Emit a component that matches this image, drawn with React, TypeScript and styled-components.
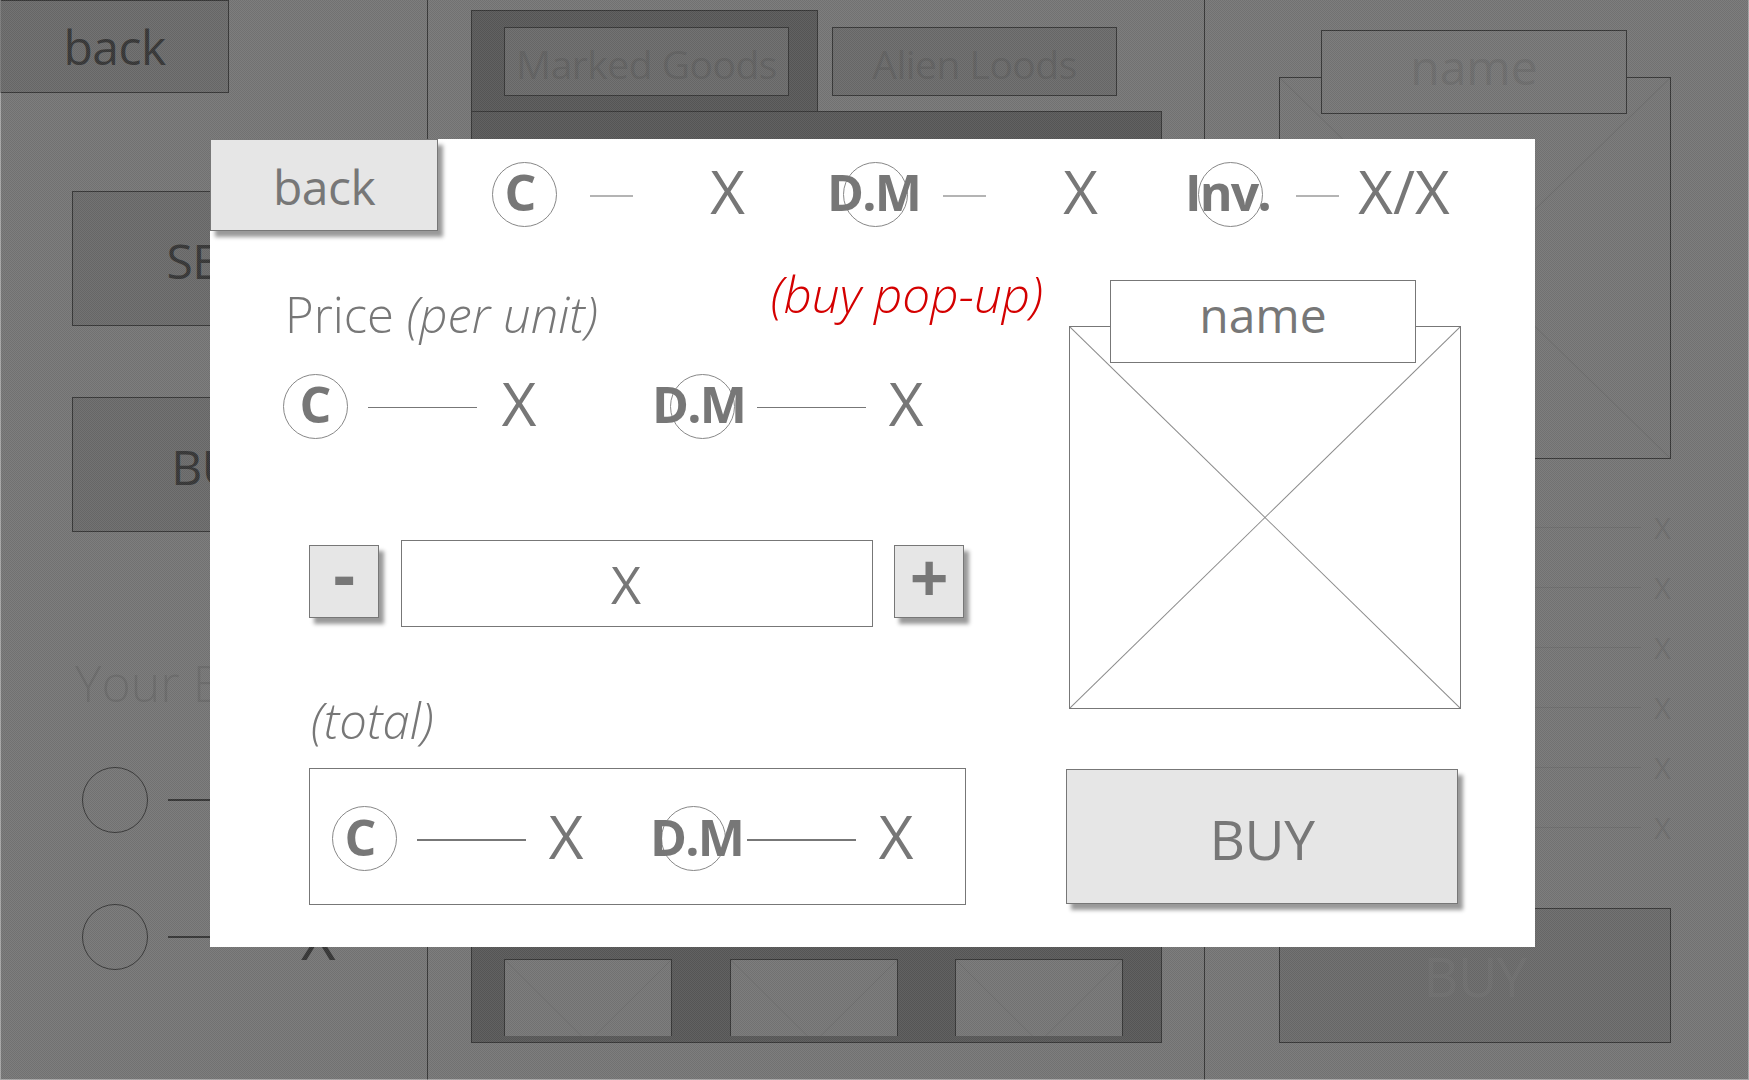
import styled, { createGlobalStyle } from 'styled-components';

const GlobalStyle = createGlobalStyle`
  html, body {
    margin: 0;
    padding: 0;
    background: #fff;
  }
  * {
    box-sizing: border-box;
  }
`;

const FONT = `'Open Sans', 'Liberation Sans', sans-serif`;
const GREY = '#777';

// #region page behind the scrim
const Page = styled.div`
  position: relative;
  display: grid;
  grid-template-columns: 427px 777px 545px;
  width: 1749px;
  height: 1080px;
  overflow: hidden;
  background: #fff;
  color: ${GREY};
  font-family: ${FONT};
  font-weight: 400;
`;

const Column = styled.section`
  display: flex;
  flex-direction: column;
  align-items: flex-start;
  height: 1080px;
  & + & {
    border-left: 1px solid ${GREY};
  }
`;

const Button = styled.div<{ $w: number; $h: number; $ink?: string }>`
  display: grid;
  place-items: center;
  flex: none;
  width: ${p => p.$w}px;
  height: ${p => p.$h}px;
  border: 1.5px solid ${GREY};
  background: #e6e6e6;
  font-size: 48px;
  letter-spacing: -0.5px;
  color: ${p => p.$ink ?? GREY};
`;

const SideAction = styled(Button)`
  margin: 98px 0 -27px 72px;
  padding-top: 4px;
`;

const BagTitle = styled.h2`
  margin: 148px 0 54px 75px;
  font-size: 50px;
  font-weight: 300;
  line-height: 60px;
  color: #e8e8e8;
`;

const BagRow = styled.div`
  display: flex;
  align-items: center;
  margin: 0 0 71px 82px;
`;

const BagCircle = styled.span`
  flex: none;
  width: 66px;
  height: 66px;
  border: 1.5px solid ${GREY};
  border-radius: 50%;
`;

const BagDash = styled.span`
  width: 110px;
  height: 2px;
  margin: 0 23px 0 20px;
  background: ${GREY};
`;

const BagValue = styled.span`
  font-size: 60px;
  line-height: 66px;
`;

const Tabs = styled.div`
  display: flex;
  margin-left: 43px;
  height: 111px;
  flex: none;
`;

const Tab = styled.div<{ $active?: boolean }>`
  display: flex;
  align-items: flex-start;
  padding: ${p => (p.$active ? '16px 28px 0 32px' : '27px 0 0')};
  margin-top: ${p => (p.$active ? '10px' : '0')};
  margin-right: 14px;
  border: ${p => (p.$active ? `1.5px solid ${GREY}` : 'none')};
  border-bottom: none;
  background: ${p => (p.$active ? '#c1c1c1' : 'transparent')};
`;

const TabLabel = styled(Button)`
  padding-top: 4px;
  font-size: 39px;
  white-space: nowrap;
`;

const GoodsPanel = styled.div`
  display: flex;
  align-items: flex-end;
  gap: 57.5px;
  width: 691px;
  height: 932px;
  margin-left: 43px;
  padding: 0 0 6px 32px;
  border: 1.5px solid ${GREY};
  background: #c1c1c1;
`;

const Placeholder = styled.div`
  position: relative;
  background: #fff;
  border: 1.5px solid ${GREY};
`;

const Thumb = styled(Placeholder)`
  width: 168px;
  height: 77px;
  border-bottom: none;
  overflow: hidden;
`;

const Cross = styled.svg<{ $h?: number }>`
  position: absolute;
  inset: 0;
  width: 100%;
  height: ${p => (p.$h ? `${p.$h}px` : '100%')};
`;

const Crossed = ({ faint, clip }: { faint?: boolean; clip?: number }) => (
  <Cross viewBox="0 0 100 100" preserveAspectRatio="none" $h={clip}>
    <line x1="0" y1="0" x2="100" y2="100" stroke={faint ? '#ececec' : '#8a8a8a'} strokeWidth="1" vectorEffect="non-scaling-stroke" />
    <line x1="100" y1="0" x2="0" y2="100" stroke={faint ? '#ececec' : '#8a8a8a'} strokeWidth="1" vectorEffect="non-scaling-stroke" />
  </Cross>
);

const ItemImage = styled(Placeholder)`
  width: 392px;
  height: 382px;
  margin: 77px 0 0 74px;
  flex: none;
`;

const NameTag = styled.div`
  position: absolute;
  display: grid;
  place-items: center;
  padding-bottom: 12px;
  background: #fff;
  border: 1.5px solid ${GREY};
`;

const BackName = styled(NameTag)`
  top: -48px;
  left: 41px;
  width: 306px;
  height: 84px;
  font-size: 48px;
  color: #ececec;
`;

const StatRows = styled.div`
  display: flex;
  flex-direction: column;
  align-items: flex-end;
  width: 466px;
  margin-top: 51px;
  gap: 26px;
`;

const StatRow = styled.div`
  display: flex;
  align-items: center;
  height: 34px;
  color: #ececec;
  font-size: 29px;
`;

const StatDash = styled.span`
  width: 300px;
  height: 1px;
  margin-right: 13px;
  background: #ececec;
`;

const BackBuy = styled(Button)`
  margin: 64px 0 0 74px;
  font-size: 54px;
`;

// the dim layer is a fine dither in the source, with a lighter hairline at the edges
const Scrim = styled.div`
  position: absolute;
  inset: 0;
  border: solid rgba(255, 255, 255, 0.35);
  border-width: 0 1px 1px 1px;
  background-color: rgba(0, 0, 0, 0.533);
  background-image: repeating-conic-gradient(rgba(0, 0, 0, 0.05) 0 25%, rgba(255, 255, 255, 0.05) 0 50%);
  background-size: 2px 2px;
`;
// #endregion

// #region pop-up
const Modal = styled.div`
  position: absolute;
  top: 139px;
  left: 210px;
  display: flex;
  flex-direction: column;
  width: 1325px;
  height: 808px;
  background: #fff;
  color: ${GREY};
`;

const RaisedButton = styled(Button)`
  box-shadow: 5px 6px 4px rgba(0, 0, 0, 0.4);
`;

const BackButton = styled(RaisedButton)`
  padding-top: 3px;
`;

const TopBar = styled.div`
  display: flex;
  align-items: center;
  height: 92px;
  flex: none;
`;

const TopStats = styled.div`
  display: flex;
  align-items: center;
  gap: 21px;
  margin: 18px 0 0 54px;
`;

const Stat = styled.div`
  display: flex;
  align-items: center;
`;

const Coin = styled.div<{ $shift?: number; $gapLeft?: number }>`
  display: flex;
  align-items: center;
  justify-content: center;
  flex: none;
  width: 65px;
  height: 65px;
  margin-left: ${p => p.$gapLeft ?? 0}px;
  border: 1px solid #888;
  border-radius: 50%;

  span {
    flex: none;
    font-size: 50px;
    font-weight: 700;
    letter-spacing: -1.8px;
    white-space: nowrap;
    transform: translate(${p => p.$shift ?? 0}px, -2px);
  }
`;

const Dash = styled.span<{ $w: number; $soft?: boolean; $gap?: number }>`
  flex: none;
  width: ${p => p.$w}px;
  height: ${p => (p.$soft ? 2 : 1.5)}px;
  margin-top: 3px;
  margin-left: ${p => p.$gap ?? 20}px;
  background: ${p => (p.$soft ? '#b4b4b4' : GREY)};
`;

const Amount = styled.span<{ $w: number }>`
  flex: none;
  width: ${p => p.$w}px;
  margin-bottom: 6px;
  font-size: 60px;
  line-height: 66px;
  text-align: center;
`;

const Body = styled.div`
  display: grid;
  grid-template-columns: 856px 1fr;
`;

const Main = styled.div`
  display: flex;
  flex-direction: column;
  align-items: flex-start;
  padding-left: 73px;
`;

const Side = styled.div`
  display: flex;
  flex-direction: column;
  align-items: flex-start;
`;

const TitleRow = styled.div`
  display: flex;
  align-items: flex-start;
  margin-top: 33px;
  padding-left: 2px;
`;

const PriceTitle = styled.h3`
  margin: 20px 0 0;
  font-size: 49px;
  font-weight: 350;
  line-height: 60px;

  em {
    font-size: 49px;
  }
`;

const Note = styled.em`
  margin-left: 173px;
  font-size: 49.5px;
  font-weight: 350;
  line-height: 60px;
  color: #d40000;
`;

const PriceRow = styled.div`
  display: flex;
  align-items: center;
  margin-top: 26px;
`;

const Stepper = styled.div`
  display: flex;
  align-items: center;
  margin: 94px 0 0 26px;
`;

const StepButton = styled(RaisedButton)<{ $lift: number }>`
  padding-bottom: ${p => p.$lift}px;
  font-size: 68px;
  font-weight: 700;
  line-height: 20px;
`;

const QuantityBox = styled.div`
  display: grid;
  place-items: center;
  width: 472px;
  height: 87px;
  margin: 4px 21px 0 22px;
  padding-right: 22px;
  border: 1.5px solid ${GREY};
  font-size: 52px;
`;

const TotalLabel = styled.em`
  margin: 63px 0 18px 28px;
  font-size: 49px;
  font-weight: 350;
  line-height: 60px;
`;

const TotalBox = styled.div`
  display: flex;
  align-items: center;
  width: 657px;
  height: 137px;
  margin-left: 26px;
  padding: 4px 0 0 22px;
  border: 1.5px solid ${GREY};
`;

const PopupImage = styled(Placeholder)`
  width: 392px;
  height: 383px;
  margin: 95px 0 0 3px;
`;

const PopupName = styled(NameTag)`
  top: -47px;
  left: 40px;
  width: 306px;
  height: 83px;
  padding-bottom: 14px;
  font-size: 48px;
`;

const BuyButton = styled(RaisedButton)`
  margin-top: 60px;
  padding-top: 4px;
  font-size: 55px;
`;
// #endregion

const App = () => (
  <>
    <GlobalStyle />
    <Page>
      <Column>
        <Button $w={229} $h={93}>back</Button>
        <SideAction $w={290} $h={135}>SELL</SideAction>
        <SideAction $w={290} $h={135}>BUY</SideAction>
        <BagTitle>Your Bag</BagTitle>
        {[0, 1].map(i => (
          <BagRow key={i}>
            <BagCircle />
            <BagDash />
            <BagValue>X</BagValue>
          </BagRow>
        ))}
      </Column>
      <Column>
        <Tabs>
          <Tab $active>
            <TabLabel $w={285} $h={69} $ink="#d2d2d2">Marked Goods</TabLabel>
          </Tab>
          <Tab>
            <TabLabel $w={285} $h={69} $ink="#d2d2d2">Alien Loods</TabLabel>
          </Tab>
        </Tabs>
        <GoodsPanel>
          {[0, 1, 2].map(i => (
            <Thumb key={i}>
              <Crossed faint clip={165} />
            </Thumb>
          ))}
        </GoodsPanel>
      </Column>
      <Column>
        <ItemImage>
          <Crossed faint />
          <BackName>name</BackName>
        </ItemImage>
        <StatRows>
          {[0, 1, 2, 3, 4, 5].map(i => (
            <StatRow key={i}>
              <StatDash />X
            </StatRow>
          ))}
        </StatRows>
        <BackBuy $w={392} $h={135} $ink="#f0f0f0">BUY</BackBuy>
      </Column>
      <Scrim />
      <Modal>
        <TopBar>
          <BackButton $w={228} $h={92}>back</BackButton>
          <TopStats>
            <Stat>
              <Coin $shift={-5}><span>C</span></Coin>
              <Dash $w={43} $soft $gap={33} />
              <Amount $w={189}>X</Amount>
            </Stat>
            <Stat>
              <Coin $shift={-2}><span>D.M</span></Coin>
              <Dash $w={43} $soft $gap={35} />
              <Amount $w={189}>X</Amount>
            </Stat>
            <Stat>
              <Coin $shift={-3} $gapLeft={2}><span>Inv.</span></Coin>
              <Dash $w={43} $soft $gap={33} />
              <Amount $w={130}>X/X</Amount>
            </Stat>
          </TopStats>
        </TopBar>
        <Body>
          <Main>
            <TitleRow>
              <PriceTitle>
                Price <em>(per unit)</em>
              </PriceTitle>
              <Note>(buy pop-up)</Note>
            </TitleRow>
            <PriceRow>
              <Coin $shift={-1}><span>C</span></Coin>
              <Dash $w={109} />
              <Amount $w={84}>X</Amount>
              <Coin $shift={-4} $gapLeft={109}><span>D.M</span></Coin>
              <Dash $w={109} $gap={22} />
              <Amount $w={80}>X</Amount>
            </PriceRow>
            <Stepper>
              <StepButton $w={70} $h={73} $lift={17}>-</StepButton>
              <QuantityBox>X</QuantityBox>
              <StepButton $w={70} $h={73} $lift={9}>+</StepButton>
            </Stepper>
            <TotalLabel>(total)</TotalLabel>
            <TotalBox>
              <Coin $shift={-5}><span>C</span></Coin>
              <Dash $w={109} />
              <Amount $w={80}>X</Amount>
              <Coin $shift={3} $gapLeft={55}><span>D.M</span></Coin>
              <Dash $w={109} $gap={21} />
              <Amount $w={80}>X</Amount>
            </TotalBox>
          </Main>
          <Side>
            <PopupImage>
              <Crossed />
              <PopupName>name</PopupName>
            </PopupImage>
            <BuyButton $w={392} $h={135}>BUY</BuyButton>
          </Side>
        </Body>
      </Modal>
    </Page>
  </>
);

export default App;
